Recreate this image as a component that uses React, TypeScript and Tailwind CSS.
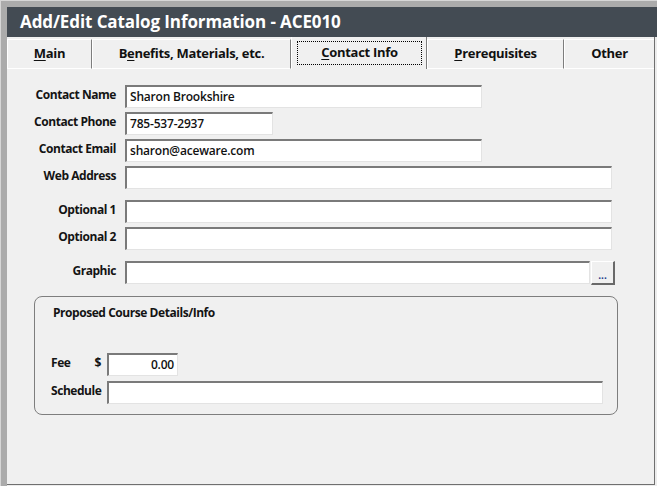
import React from "react";

const inputCls =
  "h-[23px] bg-white border-t-2 border-l-2 border-t-[#7a7a7a] border-l-[#7a7a7a] border-b border-r border-b-[#e3e3e3] border-r-[#e3e3e3] flex items-center px-[3px] text-[12px] font-semibold text-[#111] tracking-[-0.2px]";

function Row({ label, children, className }: { label: string; children: React.ReactNode; className?: string }) {
  return (
    <div className={"flex items-start " + (className ?? "")}>
      <div className="w-[109px] text-right pt-[2px] leading-[16px] text-[12px] font-bold text-[#141414] tracking-[-0.45px]">
        {label}
      </div>
      <div className="ml-[9px] flex">{children}</div>
    </div>
  );
}

function Tab({ label, u, rest, w, selected }: { label: string; u: string; rest: string; w: string; selected?: boolean }) {
  if (selected) {
    return (
      <div className={`${w} h-[32px] border-l border-white border-r border-r-[#7d7d7d] bg-[#f0f0f0] flex p-[4px] pl-[5px]`}>
        <div className="flex-1 border border-dotted border-black flex items-center justify-center text-[13px] font-bold text-[#111] tracking-[-0.3px]">
          <span className="underline underline-offset-2">{u}</span>
          {rest}
        </div>
      </div>
    );
  }
  return (
    <div className={`${w} h-[30px] border-t border-l border-b border-white border-r border-r-[#7d7d7d] bg-[#f0f0f0] flex items-center justify-center text-[13px] font-bold text-[#111] tracking-[-0.3px]`}>
      {u ? (
        <>
          <span className="underline underline-offset-2">{u}</span>
          {rest}
        </>
      ) : (
        rest
      )}
    </div>
  );
}

export default function App() {
  return (
    <div className="w-[657px] h-[486px] bg-[#ababab] border-l border-t border-[#d6d6d6] pl-[6px] pt-[6px] flex flex-col font-['Open_Sans',sans-serif] overflow-hidden">
      <div className="h-[30px] shrink-0 bg-[#434b53] flex items-center pl-[13px] text-white text-[17px] font-bold tracking-[-0.1px]">
        Add/Edit Catalog Information - ACE010
      </div>
      <div className="flex-1 bg-[#ececec] flex flex-col">
        <div className="flex-1 mr-[2px] mb-[1px] bg-[#f0f0f0] border-r border-b border-[#6f6f6f] flex flex-col">
          <div className="flex items-end h-[32px] shrink-0">
            <Tab w="w-[85px]" u="M" rest="ain" label="Main" />
            <div className="w-[199px] h-[30px] border-t border-l border-b border-white border-r border-r-[#7d7d7d] bg-[#f0f0f0] flex items-center justify-center text-[13px] font-bold text-[#111] tracking-[-0.3px]">
              B<span className="underline underline-offset-2">e</span>nefits, Materials, etc.
            </div>
            <Tab w="w-[136px]" u="C" rest="ontact Info" label="Contact Info" selected />
            <Tab w="w-[137px]" u="P" rest="rerequisites" label="Prerequisites" />
            <div className="w-[90px] h-[30px] border-t border-l border-b border-white bg-[#f0f0f0] flex items-center justify-center text-[13px] font-bold text-[#111] tracking-[-0.3px]">
              Other
            </div>
          </div>

          <div className="flex flex-col pt-[16px]">
            <Row label="Contact Name">
              <div className={inputCls + " w-[357px]"}>Sharon Brookshire</div>
            </Row>
            <Row label="Contact Phone" className="mt-[4px]">
              <div className={inputCls + " w-[148px]"}>785-537-2937</div>
            </Row>
            <Row label="Contact Email" className="mt-[4px]">
              <div className={inputCls + " w-[357px]"}>sharon@aceware.com</div>
            </Row>
            <Row label="Web Address" className="mt-[4px]">
              <div className={inputCls + " w-[487px]"}></div>
            </Row>
            <Row label="Optional 1" className="mt-[11px]">
              <div className={inputCls + " w-[487px]"}></div>
            </Row>
            <Row label="Optional 2" className="mt-[4px]">
              <div className={inputCls + " w-[487px]"}></div>
            </Row>
            <Row label="Graphic" className="mt-[11px]">
              <div className={inputCls + " w-[465px]"}></div>
              <div className="ml-[1px] w-[24px] h-[24px] bg-[#f0f0f0] border-t border-l border-white border-b-2 border-r-2 border-b-[#696969] border-r-[#696969] flex items-end justify-center pb-[3px] text-[10px] font-bold leading-[10px] text-[#1a3a8a]">
                ...
              </div>
            </Row>

            <div className="ml-[27px] mt-[11px] w-[584px] border border-[#7e7e7e] rounded-[8px] pl-[16px] pt-[8px] pb-[10px] flex flex-col">
              <div className="pl-[2px] leading-[16px] text-[12px] font-bold text-[#141414] tracking-[-0.45px]">
                Proposed Course Details/Info
              </div>
              <div className="flex items-start mt-[32px]">
                <div className="w-[56px] flex justify-between pr-[6px] pt-[2px] leading-[16px] text-[12px] font-bold text-[#141414] tracking-[-0.45px]">
                  <span>Fee</span>
                  <span>$</span>
                </div>
                <div className={inputCls + " w-[71px] justify-end"}>0.00</div>
              </div>
              <div className="flex items-start mt-[5px]">
                <div className="w-[56px] pt-[2px] leading-[16px] text-[12px] font-bold text-[#141414] tracking-[-0.45px]">
                  Schedule
                </div>
                <div className={inputCls + " w-[496px]"}></div>
              </div>
            </div>
          </div>
        </div>
      </div>
    </div>
  );
}
